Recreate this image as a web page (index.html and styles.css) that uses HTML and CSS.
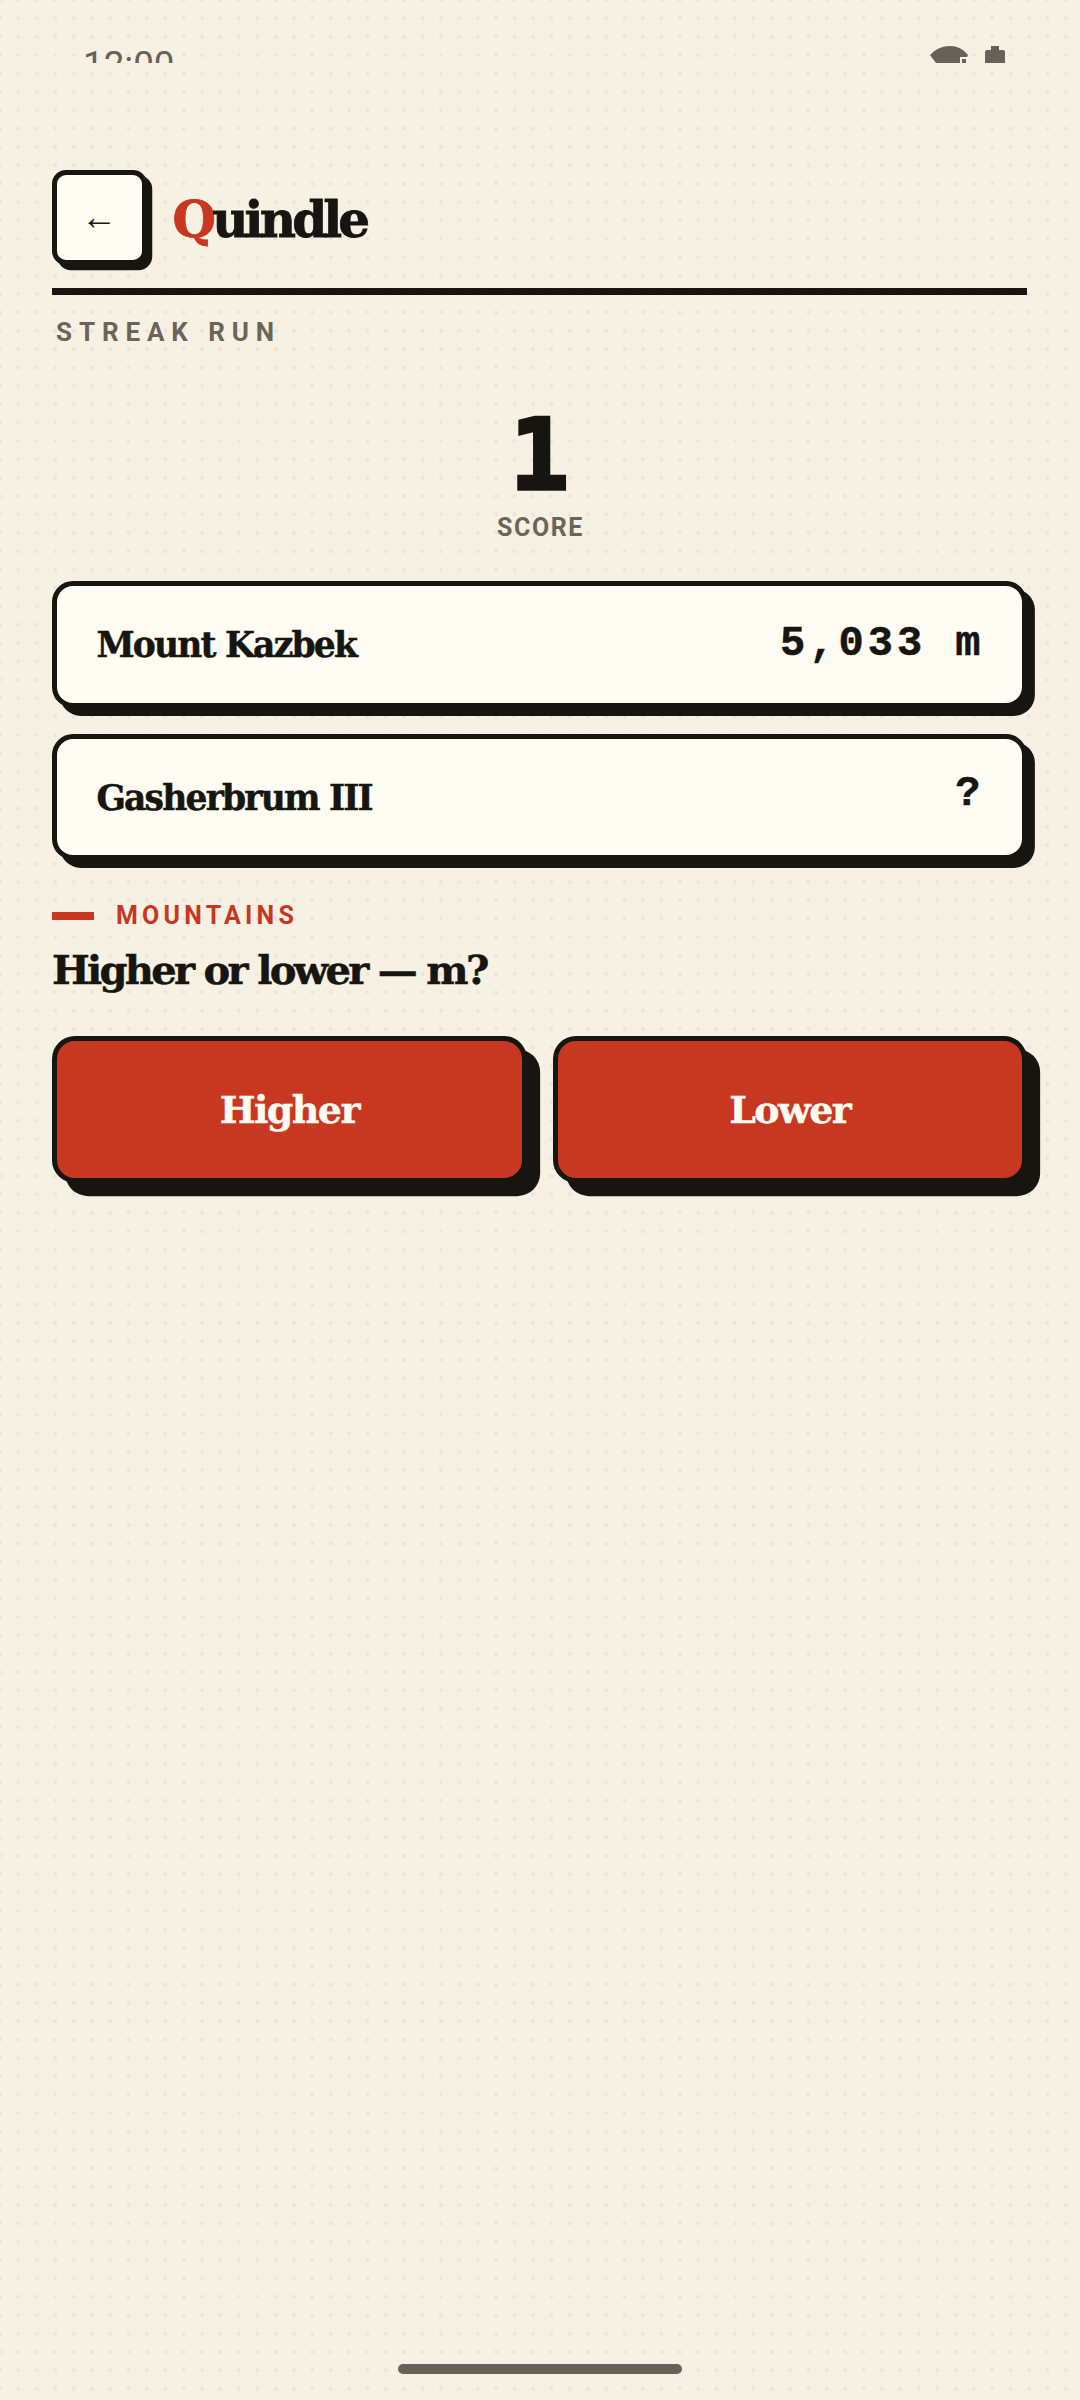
FILE: index.html
```html
<!DOCTYPE html>
<html lang="en">
<head>
  <meta charset="UTF-8" />
  <meta name="viewport" content="width=device-width, initial-scale=1.0" />
  <title>Quindle</title>
  <link rel="stylesheet" href="styles.css">
</head>
<body>
  <div class="screen">
    <div class="status">
      <span class="status-time">12:00</span>
      <div class="status-icons">
        <svg class="icon-wifi" width="38" height="17" viewBox="0 0 38 17">
          <path d="M0 9 Q8 0 20 0 Q31 0 38 9 L37 11 L30 11 L30 17 L6 17 Z"/>
          <rect x="32" y="13" width="4" height="4"/>
        </svg>
        <svg class="icon-battery" width="20" height="17" viewBox="0 0 20 17">
          <path d="M6 0 H14 V4 H18 Q20 4 20 6 V17 H0 V6 Q0 4 2 4 H6 Z"/>
        </svg>
      </div>
    </div>

    <div class="content">
      <header class="topbar">
        <button class="back">←</button>
        <h1 class="logo"><span class="logo-q">Q</span>uindle</h1>
      </header>
      <div class="mode">STREAK RUN</div>

      <div class="score">
        <div class="score-num">1</div>
        <div class="score-label">SCORE</div>
      </div>

      <div class="card">
        <span class="card-name">Mount Kazbek</span>
        <span class="card-value">5,033 m</span>
      </div>
      <div class="card">
        <span class="card-name">Gasherbrum III</span>
        <span class="card-value card-hidden">?</span>
      </div>

      <div class="category">
        <span class="category-bar"></span>
        <span class="category-name">MOUNTAINS</span>
      </div>
      <h2 class="question">Higher or lower — m?</h2>

      <div class="actions">
        <button class="choice">Higher</button>
        <button class="choice">Lower</button>
      </div>
    </div>

    <div class="home-bar"></div>
  </div>
</body>
</html>
```

FILE: styles.css
```css
:root {
  --paper: #f7f1e4;
  --dot: #ebe6da;
  --ink: #17150f;
  --card: #fffcf4;
  --red: #c8371f;
  --muted: #6b6558;
  --system: #66625a;
  --slab: "DejaVu Serif", serif;
  --mono: "Liberation Mono", monospace;
  --label: "Roboto", sans-serif;
}

* {
  box-sizing: border-box;
}

html, body {
  margin: 0;
  padding: 0;
}

body {
  background-color: var(--paper);
  background-image: radial-gradient(circle at 2px 2px, var(--dot) 1.7px, transparent 2.4px);
  background-size: 18.375px 18.375px;
  background-position: -2px -2px;
  color: var(--ink);
}

.screen {
  height: 2400px;
  display: flex;
  flex-direction: column;
}

/* status bar is cut off at the top of the app in the reference */
.status {
  height: 63px;
  overflow: hidden;
  display: flex;
  justify-content: space-between;
  padding: 0 75px 0 83px;
  color: var(--system);
}

.status-time {
  font-family: "Roboto", sans-serif;
  font-size: 36.75px;
  line-height: 43px;
  margin-top: 43px;
}

.status-icons {
  display: flex;
  gap: 17px;
  padding-top: 46px;
}

.status-icons svg {
  display: block;
  fill: var(--system);
}

.content {
  padding: 107px 53px 0 52px;
}

.topbar {
  display: flex;
  align-items: center;
  gap: 26px;
  padding-bottom: 23.6px;
  border-bottom: 7.875px solid var(--ink);
}

.back {
  width: 94.5px;
  height: 94.5px;
  padding: 0;
  border: 5.25px solid var(--ink);
  border-radius: 14px;
  background: var(--card);
  box-shadow: 5.25px 5.25px 0 var(--ink);
  color: var(--ink);
  font-family: "Liberation Sans", sans-serif;
  font-size: 36px;
}

.logo {
  margin: 6px 0 0;
  font-family: var(--slab);
  font-size: 50px;
  font-weight: 700;
  line-height: 60px;
  letter-spacing: -3.9px;
  -webkit-text-stroke: 0.8px currentColor;
}

.logo-q {
  color: var(--red);
}

.mode {
  margin-top: 21px;
  padding-left: 4px;
  font-family: var(--label);
  font-size: 26px;
  font-weight: 700;
  line-height: 32px;
  letter-spacing: 6.9px;
  color: var(--muted);
}

.score {
  margin-top: 51px;
  margin-bottom: 38px;
  text-align: center;
}

.score-num {
  font-family: "DejaVu Sans Mono", monospace;
  font-size: 98px;
  font-weight: 700;
  line-height: 112px;
  -webkit-text-stroke: 3.5px var(--ink);
}

.score-label {
  margin-top: 2px;
  padding-left: 2px;
  font-family: var(--label);
  font-size: 25px;
  font-weight: 700;
  line-height: 30px;
  letter-spacing: 1.6px;
  color: var(--muted);
}

.card {
  height: 126.5px;
  margin-bottom: 26px;
  padding: 0 37.5px 0 39.4px;
  display: flex;
  justify-content: space-between;
  align-items: center;
  background: var(--card);
  border: 5.25px solid var(--ink);
  border-radius: 21px;
  box-shadow: 7.875px 7.875px 0 var(--ink);
}

.card-name {
  margin-top: 2px;
  font-family: var(--slab);
  font-size: 34.5px;
  font-weight: 700;
  letter-spacing: -1.8px;
  -webkit-text-stroke: 0.5px var(--ink);
}

.card-value {
  font-family: var(--mono);
  font-size: 42px;
  font-weight: 700;
  letter-spacing: 4px;
  -webkit-text-stroke: 0.5px var(--ink);
}

.card-hidden {
  margin-top: -6px;
}

.category {
  margin-top: 40.5px;
  display: flex;
  align-items: center;
  gap: 22px;
}

.category-bar {
  width: 42px;
  height: 7.875px;
  background: var(--red);
}

.category-name {
  font-family: var(--label);
  font-size: 25px;
  font-weight: 700;
  line-height: 30px;
  letter-spacing: 4.2px;
  color: var(--red);
}

.question {
  margin: 12.5px 0 0;
  font-family: var(--slab);
  font-size: 40px;
  font-weight: 700;
  line-height: 54px;
  letter-spacing: -2.7px;
  -webkit-text-stroke: 0.5px var(--ink);
}

.actions {
  margin-top: 39px;
  display: flex;
  gap: 26px;
}

.choice {
  flex: 1;
  height: 147px;
  padding: 0;
  background: var(--red);
  border: 5.25px solid var(--ink);
  border-radius: 23px;
  box-shadow: 13.125px 13.125px 0 var(--ink);
  color: var(--card);
  font-family: var(--slab);
  font-size: 38px;
  font-weight: 700;
  letter-spacing: -1.6px;
  -webkit-text-stroke: 0.4px var(--card);
}

.home-bar {
  width: 283.5px;
  height: 10px;
  margin: auto auto 26px;
  border-radius: 5px;
  background: var(--system);
}
```
